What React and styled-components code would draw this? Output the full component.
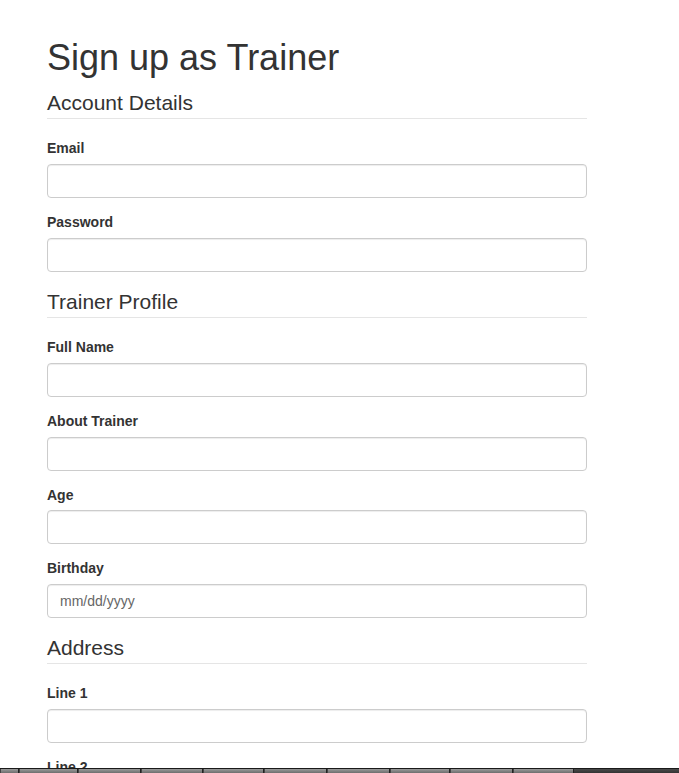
import React from "react";
import styled, { createGlobalStyle } from "styled-components";

const GlobalStyle = createGlobalStyle`
    html, body {
        margin: 0;
        padding: 0;
        background: #fff;
        overflow: hidden;
    }
    body {
        font-family: "Liberation Sans", Arial, Helvetica, sans-serif;
        font-size: 14px;
        line-height: 1.42857;
        color: #333;
    }
    * {
        box-sizing: border-box;
    }
`;

const sections = [
    {
        legend: "Account Details",
        fields: [
            { id: "email", label: "Email", type: "email" },
            { id: "password", label: "Password", type: "password" },
        ],
    },
    {
        legend: "Trainer Profile",
        fields: [
            { id: "fullName", label: "Full Name", type: "text" },
            { id: "about", label: "About Trainer", type: "text" },
            { id: "age", label: "Age", type: "text" },
            { id: "birthday", label: "Birthday", type: "text", placeholder: "mm/dd/yyyy" },
        ],
    },
    {
        legend: "Address",
        fields: [
            { id: "line1", label: "Line 1", type: "text" },
            { id: "line2", label: "Line 2", type: "text" },
            { id: "city", label: "City", type: "text" },
        ],
    },
];

// taskbar button widths, left to right
const taskButtons = [19, 59, 63, 62, 61, 63, 63, 60, 63, 61];

const App = () => {
    return (
        <>
            <GlobalStyle />
            <Page>
                <Form onSubmit={(e) => e.preventDefault()}>
                    <Title>Sign up as Trainer</Title>
                    {sections.map((section) => (
                        <Fieldset key={section.legend}>
                            <Legend>{section.legend}</Legend>
                            {section.fields.map((field) => (
                                <FormGroup key={field.id}>
                                    <Label htmlFor={field.id}>{field.label}</Label>
                                    <Input
                                        id={field.id}
                                        type={field.type}
                                        placeholder={field.placeholder}
                                    />
                                </FormGroup>
                            ))}
                        </Fieldset>
                    ))}
                </Form>
            </Page>

            {/* window taskbar peeking in at the bottom edge */}
            <Taskbar>
                {taskButtons.map((w, i) => (
                    <TaskButton key={i} style={{ width: w }} />
                ))}
                <TaskRest />
            </Taskbar>
        </>
    );
};

const Page = styled.div`
    padding: 18px 0 40px 47px;
`;

const Form = styled.form`
    width: 540px;
`;

const Title = styled.h1`
    margin: 20px 0 10px;
    font-size: 36px;
    font-weight: 500;
    line-height: 1.1;
    color: #333;
`;

const Fieldset = styled.fieldset`
    margin: 0;
    padding: 0;
    border: 0;
    min-width: 0;
`;

const Legend = styled.legend`
    display: block;
    width: 100%;
    padding: 0;
    margin-bottom: 20px;
    font-size: 21px;
    line-height: inherit;
    color: #333;
    border: 0;
    border-bottom: 1px solid #e5e5e5;
`;

const FormGroup = styled.div`
    margin-bottom: 15px;
`;

const Label = styled.label`
    display: inline-block;
    max-width: 100%;
    margin-bottom: 5px;
    font-weight: 700;
`;

const Input = styled.input`
    display: block;
    width: 100%;
    height: 34px;
    padding: 6px 12px;
    font-family: inherit;
    font-size: 14px;
    line-height: 1.42857;
    color: #555;
    background: #fff;
    border: 1px solid #ccc;
    border-radius: 4px;
    box-shadow: inset 0 1px 1px rgba(0, 0, 0, 0.075);
    outline: none;

    &::placeholder {
        color: #666;
    }
`;

const Taskbar = styled.div`
    position: fixed;
    left: 0;
    right: 0;
    bottom: 0;
    height: 5px;
    display: flex;
    border-top: 1px solid #1a1a1a;
    background: #2e2e2e;
`;

const TaskButton = styled.div`
    height: 100%;
    border-left: 1px solid #444;
    border-right: 1px solid #222;
    background: linear-gradient(#9a9a9a, #6e6e6e);
`;

const TaskRest = styled.div`
    flex: 1;
    background: linear-gradient(#4a4a4a, #333);
`;

export default App;
